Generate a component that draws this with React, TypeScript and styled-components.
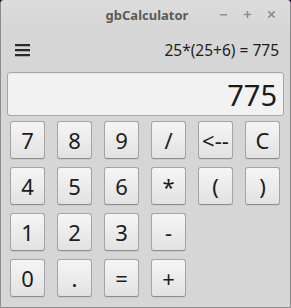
import React from "react";
import styled, { createGlobalStyle } from "styled-components";

const Global = createGlobalStyle`
  html, body { margin: 0; padding: 0; background: #2b1630; }
  body { width: 291px; height: 308px; overflow: hidden; font-family: "Noto Sans", "Open Sans", sans-serif; }
`;

const Window = styled.div`
  box-sizing: border-box;
  width: 291px;
  height: 308px;
  background: #d6d6d6;
  border: 1px solid #8c8c8c;
  border-top: none;
  border-radius: 4px 4px 0 0;
  display: flex;
  flex-direction: column;
`;

const TitleBar = styled.div`
  height: 30px;
  display: flex;
  align-items: center;
  position: relative;
  border-radius: 4px 4px 0 0;
  background: linear-gradient(#dcdcdc, #d6d6d6);
`;

const Title = styled.div`
  position: absolute;
  left: 0;
  right: 0;
  top: 6px;
  text-align: center;
  font-size: 13px;
  font-weight: bold;
  color: #5a5a5a;
  padding-left: 3px;
`;

const Controls = styled.div`
  margin-left: auto;
  margin-right: 14px;
  display: flex;
  gap: 15px;
  align-items: center;
  margin-top: -2px;
`;

const Ctl = styled.svg`
  width: 9px;
  height: 9px;
  display: block;
`;

const Header = styled.div`
  height: 40px;
  display: flex;
  align-items: center;
  padding: 0 11px 0 14px;
`;

const Burger = styled.div`
  display: flex;
  flex-direction: column;
  gap: 3px;
  width: 15px;
  & > span {
    display: block;
    height: 2px;
    background: #2a2a2a;
    box-shadow: 0 0.5px 0 rgba(0,0,0,0.4);
  }
`;

const Expr = styled.div`
  margin-left: auto;
  font-size: 15.5px;
  color: #1e1e1e;
`;

const Display = styled.div`
  box-sizing: border-box;
  margin: 2px 6px 0 6px;
  height: 44px;
  border: 1px solid #a6a6a6;
  border-radius: 3px;
  background: #f2f2f2;
  display: flex;
  align-items: center;
  justify-content: flex-end;
  padding-right: 6px;
  font-size: 29px;
  color: #1a1a1a;
  box-shadow: inset 0 1px 1px rgba(0,0,0,0.05);
`;

const Grid = styled.div`
  display: grid;
  grid-template-columns: repeat(6, 35px);
  grid-auto-rows: 38px;
  column-gap: 12px;
  row-gap: 8px;
  padding: 5px 0 0 9px;
`;

const Key = styled.button`
  box-sizing: border-box;
  margin: 0;
  padding: 0;
  border: 1px solid #a4a4a4;
  border-bottom-color: #8e8e8e;
  border-radius: 3px;
  background: linear-gradient(#f5f5f5, #e2e2e2);
  box-shadow: 0 1px 0 rgba(0,0,0,0.06);
  font-family: "Noto Sans", "Open Sans", sans-serif;
  font-size: 22px;
  color: #1c1c1c;
  display: flex;
  align-items: center;
  justify-content: center;
  line-height: 1;
`;

const rows: (string | null)[][] = [
  ["7", "8", "9", "/", "<--", "C"],
  ["4", "5", "6", "*", "(", ")"],
  ["1", "2", "3", "-", null, null],
  ["0", ".", "=", "+", null, null],
];

export default function App() {
  return (
    <>
      <Global />
      <Window>
        <TitleBar>
          <Title>gbCalculator</Title>
          <Controls>
            <Ctl viewBox="0 0 10 10">
              <rect x="1" y="4.5" width="8" height="1.6" fill="#8e8e8e" />
            </Ctl>
            <Ctl viewBox="0 0 10 10">
              <rect x="1" y="4.2" width="8" height="1.6" fill="#8e8e8e" />
              <rect x="4.2" y="1" width="1.6" height="8" fill="#8e8e8e" />
            </Ctl>
            <Ctl viewBox="0 0 10 10">
              <path d="M1.5 1.5 L8.5 8.5 M8.5 1.5 L1.5 8.5" stroke="#8e8e8e" strokeWidth="1.8" />
            </Ctl>
          </Controls>
        </TitleBar>
        <Header>
          <Burger>
            <span />
            <span />
            <span />
          </Burger>
          <Expr>25*(25+6) = 775</Expr>
        </Header>
        <Display>775</Display>
        <Grid>
          {rows.flat().map((k, i) =>
            k === null ? <div key={i} /> : <Key key={i}>{k}</Key>
          )}
        </Grid>
      </Window>
    </>
  );
}
